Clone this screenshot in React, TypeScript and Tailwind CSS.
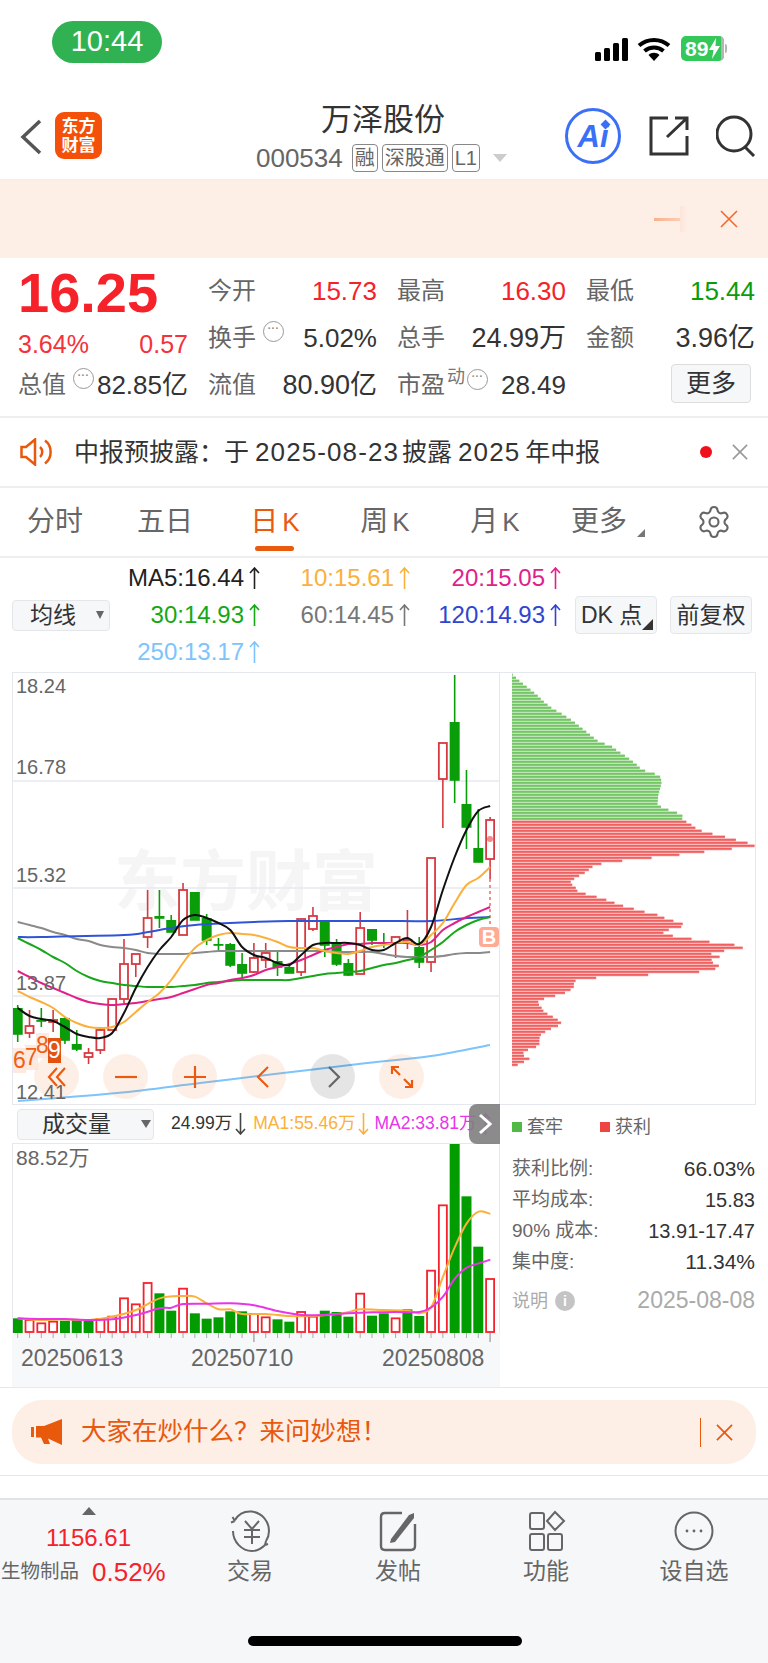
import { Settings } from "lucide-react"

const FONT = "font-['Liberation_Sans','Noto_Sans_CJK_SC',sans-serif]"

type Pt = [number, number]

// one entry per trading day: body top, body bottom, wick top, wick bottom, rising
const CANDLES: [number, number, number, number, boolean][] = [
  [1008, 1034, 1005, 1042, false],
  [1026, 1033, 1010, 1038, true],
  [1020, 1021, 1008, 1027, false],
  [1020, 1022, 1010, 1032, true],
  [1018, 1040, 1017, 1044, false],
  [1044, 1049, 1030, 1051, false],
  [1053, 1057, 1048, 1064, true],
  [1030, 1050, 1029, 1054, true],
  [999, 1030, 999, 1030, true],
  [964, 999, 939, 1003, true],
  [954, 964, 954, 977, true],
  [918, 937, 890, 948, true],
  [916, 918, 890, 928, false],
  [920, 932, 915, 932, false],
  [890, 935, 883, 935, true],
  [892, 920, 892, 920, false],
  [918, 940, 914, 945, false],
  [944, 945, 938, 951, false],
  [944, 965, 943, 967, false],
  [964, 973, 953, 977, false],
  [958, 972, 943, 973, true],
  [953, 960, 943, 968, true],
  [961, 967, 952, 976, false],
  [967, 973, 963, 973, false],
  [919, 972, 919, 976, true],
  [916, 929, 907, 931, true],
  [922, 945, 920, 957, false],
  [943, 964, 939, 966, false],
  [963, 975, 959, 976, false],
  [928, 974, 912, 974, true],
  [929, 940, 929, 945, false],
  [942, 943, 933, 948, false],
  [937, 943, 937, 958, true],
  [940, 943, 910, 949, true],
  [947, 962, 937, 968, false],
  [858, 962, 858, 972, true],
  [743, 779, 743, 828, true],
  [722, 780, 675, 803, false],
  [804, 827, 770, 849, false],
  [848, 862, 809, 862, false],
  [820, 859, 817, 879, true],
]

const VOLUME: [number, boolean][] = [
  [655, false], [660, true], [670, true], [665, true], [662, false], [660, false], [658, false],
  [657, true], [650, true], [595, true], [613, true], [549, true], [580, false], [632, false],
  [566, true], [640, false], [656, false], [652, false], [634, false], [634, false], [642, true],
  [652, true], [658, false], [665, false], [636, true], [650, true], [632, false], [636, false],
  [650, false], [581, true], [647, false], [640, false], [655, true], [628, false], [648, false],
  [512, true], [316, true], [132, false], [289, false], [440, false], [537, true],
]

const MA5 = [1008, 1016, 1019, 1021, 1027, 1034, 1037, 1038, 1033, 1013, 988, 967, 950, 937, 920, 915, 918, 923, 930, 947, 955, 958, 963, 965, 955, 945, 943, 943, 943, 945, 950, 950, 943, 938, 944, 927, 890, 857, 830, 811, 806]
const MA10 = [991, 997, 1002, 1008, 1017, 1023, 1027, 1028, 1027, 1022, 1012, 1002, 993, 980, 963, 948, 940, 935, 933, 934, 935, 938, 942, 947, 948, 948, 951, 953, 954, 951, 947, 945, 943, 942, 945, 935, 923, 903, 885, 878, 867]
const MA20 = [971, 977, 983, 988, 993, 998, 1002, 1004, 1005, 1004, 1003, 1001, 999, 997, 993, 989, 985, 983, 980, 978, 975, 970, 967, 964, 960, 955, 950, 947, 944, 944, 943, 943, 943, 943, 945, 942, 930, 923, 917, 912, 907]
const MA30 = [938, 944, 950, 957, 963, 971, 977, 981, 983, 985, 986, 987, 987, 987, 986, 985, 983, 982, 981, 980, 980, 980, 980, 980, 978, 976, 974, 973, 972, 971, 968, 965, 963, 960, 957, 950, 942, 932, 925, 920, 917]
const MA60 = [922, 925, 928, 932, 935, 939, 941, 945, 947, 948, 950, 953, 954, 954, 954, 953, 952, 951, 951, 951, 951, 951, 951, 951, 951, 951, 951, 952, 952, 952, 952, 954, 956, 957, 957, 957, 956, 954, 953, 953, 952]
const MA120: Pt[] = [[18, 937], [41, 937], [124, 935], [148, 932], [171, 928], [195, 925], [230, 923], [254, 922], [289, 921], [325, 921], [384, 921], [431, 921], [467, 918], [490, 917]]
const MA250: Pt[] = [[18, 1101], [117, 1093], [200, 1083], [283, 1073], [367, 1063], [431, 1056], [490, 1045]]

const VOL_MA1: Pt[] = [[53, 655], [124, 660], [195, 658], [266, 660], [337, 650], [408, 630], [479, 595], [549, 588], [585, 590], [620, 610], [656, 628], [691, 628], [727, 642], [797, 642], [868, 648], [939, 648], [1010, 642], [1046, 636], [1081, 628], [1152, 630], [1223, 632], [1258, 640], [1294, 620], [1329, 530], [1365, 440], [1400, 370], [1436, 335], [1471, 342]]
const VOL_MA2: Pt[] = [[53, 655], [124, 657], [195, 657], [266, 660], [337, 658], [408, 645], [479, 625], [514, 623], [549, 612], [620, 611], [691, 610], [762, 616], [833, 633], [904, 645], [975, 645], [1046, 640], [1117, 637], [1187, 636], [1258, 636], [1294, 622], [1329, 590], [1365, 535], [1400, 503], [1436, 490], [1471, 479]]

// chip distribution outline: [row offset, right edge], both in 1/3 px
const CHIPS: Pt[] = [[40, 38], [60, 60], [80, 85], [100, 110], [120, 130], [140, 155], [160, 190], [180, 220], [200, 245], [220, 270], [240, 295], [255, 335], [270, 355], [290, 385], [310, 410], [325, 425], [335, 460], [345, 480], [360, 485], [375, 482], [400, 475], [430, 472], [440, 490], [450, 520], [460, 548], [470, 545], [478, 552], [485, 568], [495, 580], [505, 595], [515, 628], [522, 660], [530, 690], [540, 725], [548, 760], [555, 765], [565, 665], [575, 578], [585, 498], [592, 422], [600, 348], [610, 285], [620, 272], [630, 260], [638, 248], [645, 233], [655, 218], [665, 208], [672, 220], [680, 228], [690, 233], [698, 260], [708, 297], [716, 322], [725, 346], [735, 375], [743, 405], [752, 437], [760, 472], [768, 490], [778, 520], [786, 548], [795, 548], [804, 508], [814, 490], [822, 512], [830, 563], [840, 620], [850, 703], [857, 740], [866, 686], [875, 625], [884, 665], [893, 636], [902, 630], [910, 666], [918, 640], [927, 653], [936, 528], [945, 340], [953, 237], [962, 218], [971, 225], [980, 218], [990, 205], [998, 185], [1007, 150], [1016, 118], [1025, 112], [1035, 122], [1044, 128], [1052, 132], [1060, 148], [1070, 165], [1078, 178], [1087, 186], [1095, 170], [1104, 148], [1113, 132], [1122, 120], [1132, 118], [1141, 118], [1150, 118], [1158, 105], [1167, 78], [1176, 68], [1185, 73], [1192, 88], [1201, 72], [1210, 53]]

const xAt = (i: number) => 17.7 + 11.81 * i

function curve(pts: Pt[]) {
  let d = `M${pts[0][0]} ${pts[0][1]}`
  for (let i = 0; i < pts.length - 1; i++) {
    const p0 = pts[i - 1] ?? pts[i]
    const p1 = pts[i]
    const p2 = pts[i + 1]
    const p3 = pts[i + 2] ?? p2
    const c1x = p1[0] + (p2[0] - p0[0]) / 6
    const c1y = p1[1] + (p2[1] - p0[1]) / 6
    const c2x = p2[0] - (p3[0] - p1[0]) / 6
    const c2y = p2[1] - (p3[1] - p1[1]) / 6
    d += ` C${c1x} ${c1y} ${c2x} ${c2y} ${p2[0]} ${p2[1]}`
  }
  return d
}

const daily = (ys: number[]): Pt[] => ys.map((y, i) => [xAt(i), y])
const volPts = (pts: Pt[]): Pt[] => pts.map(([x, y]) => [x / 3, 1100 + y / 3])

function chipRight(z: number) {
  for (let i = 0; i < CHIPS.length - 1; i++) {
    const [a, ax] = CHIPS[i]
    const [b, bx] = CHIPS[i + 1]
    if (z >= a && z <= b) return ax + ((bx - ax) * (z - a)) / (b - a)
  }
  return 0
}

function Cross({ size, color, width, className }: { size: number; color: string; width: number; className: string }) {
  return (
    <svg className={className} width={size} height={size} viewBox="0 0 18 18" fill="none" stroke={color} strokeWidth={width}>
      <path d="M1 1L17 17M17 1L1 17" />
    </svg>
  )
}

function StatusBar() {
  return (
    <div className="flex h-[85px] items-start">
      <div className="ml-[52px] mt-[21px] flex h-[42px] w-[110px] items-center justify-center rounded-full bg-[#30b252] text-[29px] text-white">10:44</div>
      <div className="ml-[433px] mt-[36px] flex items-end">
        <div className="flex h-[24px] items-end gap-[3px]">
          <div className="h-[9px] w-[6px] rounded-[1.5px] bg-black" />
          <div className="h-[13px] w-[6px] rounded-[1.5px] bg-black" />
          <div className="h-[18px] w-[6px] rounded-[1.5px] bg-black" />
          <div className="h-[23px] w-[6px] rounded-[1.5px] bg-black" />
        </div>
        <svg className="ml-[9px]" width="34" height="24" viewBox="0 0 34 24" fill="none" stroke="#000" strokeWidth="4">
          <path d="M2 8.5C10.5 1 23.5 1 32 8.5" />
          <path d="M7.5 14C13 9.2 21 9.2 26.500 14" />
          <path d="M17 24L11.500 18C14.500 15 19.500 15 22.500 18Z" fill="#000" stroke="none" />
        </svg>
        <div className="relative ml-[10px] flex h-[25px] w-[43px] items-center overflow-hidden rounded-[5px] bg-[#34c759] pl-[4px] text-[21px] font-bold leading-none text-white">
          89
          <svg className="ml-px" width="11" height="21" viewBox="0 0 11 21"><path d="M7 0L0 12H4.500L3 21L11 8H6.500Z" fill="#fff" /></svg>
          <div className="absolute bottom-0 right-0 top-0 w-[3px] bg-[#b5b5b5]" />
        </div>
        <div className="mb-[8px] ml-px h-[9px] w-[2px] rounded-r bg-[#b5b5b5]" />
      </div>
    </div>
  )
}

function Tag({ children }: { children: string }) {
  return <span className="flex h-[28px] shrink-0 items-center justify-center whitespace-nowrap rounded-[4px] border border-[#888] px-[2px] text-[20px] leading-none text-[#666]">{children}</span>
}

function Header() {
  return (
    <div className="relative flex h-[95px] border-b border-[#eeeeee]">
      <svg className="ml-[20px] mt-[34px]" width="22" height="36" viewBox="0 0 22 36" fill="none" stroke="#555" strokeWidth="3.500"><path d="M20 2L3 18L20 34" /></svg>
      <div className="ml-[13px] mt-[27px] flex h-[47px] w-[47px] flex-col items-center justify-center rounded-[9px] bg-[#f4500a] text-[17px] font-bold leading-[19px] text-white">
        <span>东方</span>
        <span>财富</span>
      </div>
      <div className="ml-[146px] flex w-[270px] flex-col items-center pt-[18px]">
        <div className="text-[31px] leading-[34px] text-[#333]">万泽股份</div>
        <div className="mt-[7px] flex items-center gap-[4px] pr-[3px]">
          <span className="mr-[5px] text-[26px] leading-none text-[#666]">000534</span>
          <Tag>融</Tag>
          <Tag>深股通</Tag>
          <Tag>L1</Tag>
          <span className="ml-[9px] h-0 w-0 border-x-[7px] border-t-[8px] border-x-transparent border-t-[#cccccc]" />
        </div>
      </div>
      <div className="relative ml-[47px] mt-[23px] flex h-[56px] w-[56px] items-center justify-center rounded-full border-[3px] border-[#3b6ff6] text-[31px] font-bold italic leading-none text-[#3b6ff6]">
        Ai
        <span className="absolute right-[9px] top-[10px] h-[7px] w-[7px] rotate-45 bg-[#3b6ff6]" />
      </div>
      <svg className="ml-[28px] mt-[31px]" width="40" height="40" viewBox="0 0 40 40" fill="none" stroke="#333" strokeWidth="3">
        <path d="M19 2H2V38H38V20" />
        <path d="M18 21L38 2M26 2H38V14" />
      </svg>
      <svg className="ml-[27px] mt-[30px]" width="40" height="42" viewBox="0 0 40 42" fill="none" stroke="#333" strokeWidth="3">
        <circle cx="18" cy="19" r="17" />
        <path d="M29 32L38 41" />
      </svg>
    </div>
  )
}

function TopBanner() {
  return (
    <div className="flex h-[78px] items-center bg-[#fdeee6]">
      <div className="ml-[654px] h-[3px] w-[26px] bg-gradient-to-r from-[#f9b08c] to-[#fbcdb6]" />
      <div className="h-[26px] w-[7px] bg-gradient-to-r from-[#fde4d8] to-[#fdeee6]" />
      <Cross className="ml-[33px]" size={18} color="#f0692c" width={1.6} />
    </div>
  )
}

function InfoDots({ className }: { className: string }) {
  return (
    <span className={`flex h-[21px] w-[21px] shrink-0 items-center justify-center rounded-full border border-[#999] text-[10px] font-bold leading-none tracking-[0.5px] text-[#888] ${className}`}>
      <span className="mt-[-4px]">···</span>
    </span>
  )
}

function Stat({ label, value, tone, dots, sup, size = "text-[26px]" }: { label: string; value: string; tone: string; dots?: boolean; sup?: boolean; size?: string }) {
  return (
    <div className="flex h-[26px] items-center whitespace-nowrap">
      <span className="shrink-0 text-[24px] leading-none text-[#666]">{label}</span>
      {sup && <span className="ml-[2px] -translate-y-[8px] text-[18px] leading-none text-[#777]">动</span>}
      {dots && <InfoDots className={sup ? "ml-[2px] -translate-y-[6px]" : "ml-[7px] -translate-y-[7px]"} />}
      <span className={`ml-auto leading-none ${size} ${tone}`}>{value}</span>
    </div>
  )
}

function Quote() {
  return (
    <div className="h-[160px] border-b-2 border-[#eeeeee] pl-[18px] pt-[7px]">
      <div className="grid grid-cols-[170px_169px_169px_169px] gap-x-[20px]">
        <div className="row-span-2 flex flex-col">
          <div className="text-[56px] font-bold leading-[56px] text-[#f5222a]">16.25</div>
          <div className="mt-[11px] flex justify-between text-[25px] leading-none text-[#f5313a]">
            <span>3.64%</span>
            <span>0.57</span>
          </div>
        </div>
        <div className="h-[47px] pt-[13px]"><Stat label="今开" value="15.73" tone="text-[#f5222a]" /></div>
        <div className="h-[47px] pt-[13px]"><Stat label="最高" value="16.30" tone="text-[#f5222a]" /></div>
        <div className="h-[47px] pt-[13px]"><Stat label="最低" value="15.44" tone="text-[#0a9d0a]" /></div>
        <div className="h-[47px] pt-[13px]"><Stat label="换手" value="5.02%" tone="text-[#333]" dots /></div>
        <div className="h-[47px] pt-[13px]"><Stat label="总手" value="24.99万" tone="text-[#333]" size="text-[27px]" /></div>
        <div className="h-[47px] pt-[13px]"><Stat label="金额" value="3.96亿" tone="text-[#333]" size="text-[27px]" /></div>
        <div className="pt-[13px]"><Stat label="总值" value="82.85亿" tone="text-[#333]" dots /></div>
        <div className="pt-[13px]"><Stat label="流值" value="80.90亿" tone="text-[#333]" size="text-[27px]" /></div>
        <div className="pt-[13px]"><Stat label="市盈" value="28.49" tone="text-[#333]" dots sup /></div>
        <div className="flex justify-end pr-[4px] pt-[5px]">
          <button className="h-[39px] w-[80px] rounded-[4px] border border-[#dddddd] bg-[#f6f7f9] text-[25px] leading-none text-[#333]">更多</button>
        </div>
      </div>
    </div>
  )
}

function Notice() {
  return (
    <div className="flex h-[70px] items-center border-b-2 border-[#eeeeee]">
      <svg className="ml-[20px]" width="33" height="28" viewBox="0 0 33 28" fill="none" stroke="#e8590c" strokeWidth="2.500">
        <path d="M1.500 9H6L15 1.500V26.500L6 19H1.500Z" />
        <path d="M20 9C23 11.500 23 16.500 20 19" />
        <path d="M25 2.500C32.500 8 32.500 20 25 25.500" />
      </svg>
      <div className="ml-[21px] flex items-center whitespace-nowrap text-[25px] leading-none text-[#333]">
        <span>中报预披露：于</span>
        <span className="ml-[6px] text-[26px] tracking-[1.1px]">2025-08-23</span>
        <span className="ml-[3px]">披露</span>
        <span className="ml-[6px] text-[26px] tracking-[1.1px]">2025</span>
        <span className="ml-[5px]">年中报</span>
      </div>
      <span className="ml-auto h-[12px] w-[12px] rounded-full bg-[#f0101c]" />
      <Cross className="ml-[20px] mr-[20px]" size={16} color="#999" width={1.8} />
    </div>
  )
}

function Tabs() {
  return (
    <div className="grid h-[70px] grid-cols-[repeat(7,110px)] border-b-2 border-[#eeeeee]">
      <div className="flex items-center justify-center text-[28px] leading-none text-[#666]">分时</div>
      <div className="flex items-center justify-center text-[28px] leading-none text-[#666]">五日</div>
      <div className="relative flex items-center justify-center text-[28px] leading-none text-[#e85a0e]">
        日<span className="ml-[4px] text-[26px]">K</span>
        <span className="absolute bottom-[5px] left-[35px] h-[5px] w-[39px] rounded-full bg-[#e85a0e]" />
      </div>
      <div className="flex items-center justify-center text-[28px] leading-none text-[#666]">周<span className="ml-[4px] text-[26px]">K</span></div>
      <div className="flex items-center justify-center text-[28px] leading-none text-[#666]">月<span className="ml-[4px] text-[26px]">K</span></div>
      <div className="relative flex items-center justify-center pr-[12px]">
        <span className="text-[28px] leading-none text-[#666]">更多</span>
        <span className="absolute bottom-[19px] right-[15px] h-0 w-0 border-b-[8px] border-l-[8px] border-b-[#777] border-l-transparent" />
      </div>
      <div className="flex items-center justify-center pr-[3px]">
        <Settings className="text-[#666]" size={36} strokeWidth={1.4} />
      </div>
    </div>
  )
}

function Arrow({ up, color, gap }: { up: boolean; color: string; gap: string }) {
  return (
    <svg className={`shrink-0 ${gap}`} width="11" height="22" viewBox="0 0 11 22" fill="none" stroke={color} strokeWidth="1.600">
      {up ? <path d="M5.500 22V1M1 6L5.500 1L10 6" /> : <path d="M5.500 0V21M1 16L5.500 21L10 16" />}
    </svg>
  )
}

function MaValue({ text, color }: { text: string; color: string }) {
  return (
    <div className="flex h-[37px] items-center justify-end">
      <span className="text-[24px] leading-none" style={{ color }}>{text}</span>
      <Arrow up color={color} gap="ml-[5px]" />
    </div>
  )
}

function MaPanel() {
  return (
    <div className="flex h-[114px] items-center pl-[12px]">
      <div className="flex h-[31px] w-[98px] items-center rounded-[4px] border border-[#e5e6ea] bg-[#f6f7f9] pl-[17px] text-[23px] leading-none text-[#333]">
        均线
        <span className="ml-[20px] h-0 w-0 border-x-[4px] border-t-[8px] border-x-transparent border-t-[#666]" />
      </div>
      <div className="grid grid-cols-[150px_150px_151px]">
        <MaValue text="MA5:16.44" color="#222222" />
        <MaValue text="10:15.61" color="#fbb03b" />
        <MaValue text="20:15.05" color="#e0218a" />
        <MaValue text="30:14.93" color="#14a814" />
        <MaValue text="60:14.45" color="#777777" />
        <MaValue text="120:14.93" color="#2f45d0" />
        <MaValue text="250:13.17" color="#7cc4fb" />
      </div>
      <div className="relative ml-[14px] flex h-[38px] w-[82px] items-center rounded-[4px] border border-[#e5e6ea] bg-[#f6f7f9] pl-[5px] text-[23px] leading-none text-[#333]">
        DK 点
        <span className="absolute bottom-[3px] right-[3px] h-0 w-0 border-b-[11px] border-l-[11px] border-b-[#333] border-l-transparent" />
      </div>
      <div className="ml-[13px] flex h-[38px] w-[82px] items-center justify-center rounded-[4px] border border-[#e5e6ea] bg-[#f6f7f9] text-[23px] leading-none text-[#333]">前复权</div>
    </div>
  )
}

function CandleChart() {
  return (
    <svg className="absolute inset-0" width="486" height="431" viewBox="13 673 486 431" fill="none">
      {[781, 888, 996].map((y) => (
        <line key={y} x1="13" x2="499" y1={y} y2={y} stroke="#e6e8ef" strokeWidth="1.500" />
      ))}
      {CANDLES.map(([top, bottom, wickTop, wickBottom, up], i) => {
        const x = xAt(i)
        const color = up ? "#d63a40" : "#0a9d0a"
        return (
          <g key={i}>
            <line x1={x} x2={x} y1={wickTop} y2={wickBottom} stroke={color} strokeWidth="1.600" />
            {up ? (
              <rect x={x - 4} y={top} width="8" height={bottom - top} fill="#fff" stroke={color} strokeWidth="1.800" />
            ) : (
              <rect x={x - 5} y={top} width="10" height={bottom - top + 0.8} fill={color} />
            )}
          </g>
        )
      })}
      <line x1="490" x2="490" y1="879" y2="927" stroke="#f06a6a" strokeWidth="1.500" strokeDasharray="3 3" />
      <circle cx="490" cy="839" r="3" fill="#f58a8a" />
      <path d={curve(MA250)} stroke="#7cc4fb" strokeWidth="2" />
      <path d={curve(daily(MA60))} stroke="#8a8a8a" strokeWidth="2" />
      <path d={curve(MA120)} stroke="#2f54d8" strokeWidth="2" />
      <path d={curve(daily(MA30))} stroke="#1aa61a" strokeWidth="2" />
      <path d={curve(daily(MA20))} stroke="#e0218a" strokeWidth="2" />
      <path d={curve(daily(MA10))} stroke="#fbb03b" strokeWidth="2" />
      <path d={curve(daily(MA5))} stroke="#111111" strokeWidth="2" />
    </svg>
  )
}

function ToolButton({ gray, children }: { gray?: boolean; children: React.ReactNode }) {
  return (
    <div className={`flex h-[45px] w-[45px] items-center justify-center rounded-full ${gray ? "bg-black/10" : "bg-[#f47a30]/12"}`}>
      <svg width="26" height="26" viewBox="0 0 26 26" fill="none" stroke={gray ? "#666" : "#ea5a10"} strokeWidth="2.200">{children}</svg>
    </div>
  )
}

function PriceChart() {
  const labels: [string, string][] = [["18.24", "top-[1px]"], ["16.78", "top-[82px]"], ["15.32", "top-[190px]"], ["13.87", "top-[298px]"], ["12.41", "top-[407px]"]]
  return (
    <div className="relative h-[433px] border border-[#e6e8ef]">
      <div className="absolute left-[101px] top-[176px] whitespace-nowrap text-[66px] font-bold leading-none text-[#f5f5f5]">东方财富</div>
      <CandleChart />
      <div className="absolute left-[21px] top-[381px] flex gap-[24px]">
        <ToolButton><path d="M13 4L5 13L13 22M21 4L13 13L21 22" /></ToolButton>
        <ToolButton><path d="M2 13H24" /></ToolButton>
        <ToolButton><path d="M2 13H24M13 2V24" /></ToolButton>
        <ToolButton><path d="M17 3L7 13L17 23" /></ToolButton>
        <ToolButton gray><path d="M9 3L19 13L9 23" /></ToolButton>
        <ToolButton>
          <path d="M3 10V3H10M3 3L11 11M23 16V23H16M23 23L15 15" />
        </ToolButton>
      </div>
      {labels.map(([t, top]) => (
        <span key={t} className={`absolute left-[3px] text-[20px] leading-[24px] text-[#666] ${top}`}>{t}</span>
      ))}
      <span className="absolute left-0 top-[375px] h-[25px] w-[13px] bg-[#fde3d6]/80 text-center text-[23px] leading-[25px] text-[#ee5f18]">6</span>
      <span className="absolute left-[12px] top-[372px] h-[25px] w-[13px] bg-[#fde3d6]/80 text-center text-[23px] leading-[25px] text-[#ee5f18]">7</span>
      <span className="absolute left-[23px] top-[360px] h-[25px] w-[13px] bg-[#fde3d6]/80 text-center text-[23px] leading-[25px] text-[#ee5f18]">8</span>
      <span className="absolute left-[35px] top-[365px] h-[25px] w-[13px] bg-[#e2530f] text-center text-[23px] leading-[25px] text-white">9</span>
      <span className="absolute right-0 top-[254px] flex h-[20px] w-[20px] items-center justify-center rounded-[4px] bg-[#ffab94] text-[20px] font-bold leading-none text-white">B</span>
    </div>
  )
}

function VolumeHeader() {
  return (
    <div className="flex h-[38px] items-center overflow-hidden whitespace-nowrap pl-[5px] text-[17.5px] leading-none">
      <div className="flex h-[31px] w-[137px] shrink-0 items-center rounded-[4px] border border-[#e5e6ea] bg-[#f6f7f9] pl-[24px] text-[23px] text-[#333]">
        成交量
        <span className="ml-[30px] h-0 w-0 border-x-[5px] border-t-[8px] border-x-transparent border-t-[#666]" />
      </div>
      <span className="ml-[17px] text-[#333]">24.99万</span>
      <Arrow up={false} color="#444" gap="ml-[3px]" />
      <span className="ml-[7px] text-[#fbb03b]">MA1:55.46万</span>
      <Arrow up={false} color="#fbb03b" gap="ml-[3px]" />
      <span className="ml-[5px] text-[#e835e8]">MA2:33.81万</span>
      <Arrow up color="#e835e8" gap="ml-[3px]" />
    </div>
  )
}

function VolumeChart() {
  return (
    <div className="relative h-[190px] border-x border-t border-[#e6e8ef]">
      <svg className="absolute inset-0" width="486" height="189" viewBox="13 1144 486 189" fill="none">
        {VOLUME.map(([z, up], i) => {
          const x = xAt(i)
          const top = 1100 + z / 3
          return up ? (
            <rect key={i} x={x - 4} y={top} width="8" height={1332 - top} fill="#fff" stroke="#f5222d" strokeWidth="1.800" />
          ) : (
            <rect key={i} x={x - 5} y={top} width="10" height={1333 - top} fill="#009c00" />
          )
        })}
        <path d={curve(volPts(VOL_MA1))} stroke="#fbb03b" strokeWidth="2" />
        <path d={curve(volPts(VOL_MA2))} stroke="#e835e8" strokeWidth="2" />
      </svg>
      <span className="absolute left-[3px] top-[2px] text-[21px] leading-[24px] text-[#666]">88.52万</span>
    </div>
  )
}

function DateAxis() {
  return (
    <div className="h-[54px] bg-[#f7f8fa]">
      <svg className="block" width="488" height="10" viewBox="12 1333 488 10" stroke="#aaaaaa" strokeWidth="1">
        {VOLUME.map((_, i) => (
          <line key={i} x1={xAt(i)} x2={xAt(i)} y1="1333" y2={i === 20 || i === 40 ? 1342 : 1338} strokeWidth={i === 20 || i === 40 ? 1.500 : 1} />
        ))}
      </svg>
      <div className="flex pl-[9px] pt-[2px] text-[23px] leading-[26px] text-[#666]">
        <span className="w-[170px]">20250613</span>
        <span className="w-[191px]">20250710</span>
        <span>20250808</span>
      </div>
    </div>
  )
}

function ChipChart() {
  const rows: { z: number; w: number }[] = []
  for (let z = 40; z <= 1212; z += 9) rows.push({ z, w: chipRight(z) - 36 })
  return (
    <div className="h-[433px] w-[256px] border-y border-r border-[#e6e8ef] pl-[12px]">
      <svg className="block" width="243" height="431" viewBox="0 0 243 431">
        {rows.map(({ z, w }) => {
          const y = z / 3 - 13
          const loss = z < 480
          return (
            <g key={z}>
              <rect x="0" y={y} width={w / 3} height="3" fill={loss ? "#b5e0ad" : "#fbb0b0"} />
              <rect x="0" y={y + 0.6} width={w / 3} height="1.800" fill={loss ? "#74c565" : "#ef6060"} />
            </g>
          )
        })}
      </svg>
    </div>
  )
}

function ChipStats() {
  const rows = [
    ["获利比例:", "66.03%", "text-[21px]"],
    ["平均成本:", "15.83", "text-[20px]"],
    ["90% 成本:", "13.91-17.47", "text-[20px]"],
    ["集中度:", "11.34%", "text-[21px]"],
  ]
  return (
    <div className="w-[255px] pl-[12px]">
      <div className="flex h-[43px] items-center pt-[1px] text-[18px] leading-none text-[#666]">
        <span className="h-[10px] w-[10px] bg-[#52b947]" />
        <span className="ml-[5px]">套牢</span>
        <span className="ml-[37px] h-[10px] w-[10px] bg-[#ee4444]" />
        <span className="ml-[5px]">获利</span>
      </div>
      <div className="mt-[5px] flex flex-col">
        {rows.map(([k, v, size]) => (
          <div key={k} className="flex h-[31px] items-center justify-between">
            <span className="text-[19px] leading-none text-[#666]">{k}</span>
            <span className={`leading-none text-[#333] ${size}`}>{v}</span>
          </div>
        ))}
      </div>
      <div className="mt-[12px] flex items-center">
        <span className="text-[18px] leading-none text-[#aaaaaa]">说明</span>
        <span className="ml-[7px] flex h-[20px] w-[20px] items-center justify-center rounded-full bg-[#c4c4c4] text-[14px] font-bold leading-none text-white">i</span>
        <span className="ml-auto text-[23px] leading-none text-[#aaaaaa]">2025-08-08</span>
      </div>
    </div>
  )
}

function Promo() {
  return (
    <div className="h-[88px] border-b border-[#e8e8ec] px-[12px] pt-[12px]">
      <div className="flex h-[64px] items-center rounded-[30px] bg-[#fdeee6] pl-[19px] text-[#e8590c]">
        <svg width="31" height="26" viewBox="0 0 31 26">
          <path d="M0 8H3V18H0ZM5 7H13L31 0V26L17 19.500L19 25H13L10 18.500H5Z" fill="#e8590c" />
        </svg>
        <span className="ml-[19px] text-[25.500px] leading-none">大家在炒什么？来问妙想！</span>
        <span className="ml-auto h-[29px] w-px bg-[#e8590c]" />
        <Cross className="ml-[15px] mr-[23px]" size={17} color="#e8590c" width={1.8} />
      </div>
    </div>
  )
}

function NavItem({ label, children }: { label: string; children: React.ReactNode }) {
  return (
    <div className="flex w-[148px] flex-col items-center pt-[10px]">
      <svg width="44" height="42" viewBox="0 0 44 42" fill="none" stroke="#666" strokeWidth="2">{children}</svg>
      <span className="mt-[6px] text-[23px] leading-[26px] text-[#666]">{label}</span>
    </div>
  )
}

function BottomNav() {
  return (
    <div className="relative mt-[22px] h-[165px] border-t-2 border-[#e1e2e6] bg-[#f6f7f9]">
      <div className="flex">
        <div className="flex w-[176px] flex-col items-start pt-[7px]">
          <span className="ml-[82px] h-0 w-0 border-x-[7px] border-b-[8px] border-x-transparent border-b-[#666]" />
          <span className="ml-[46px] mt-[10px] text-[24px] leading-[26px] text-[#f5222a]">1156.61</span>
          <div className="mt-[8px] flex items-center whitespace-nowrap pl-px">
            <span className="text-[19.5px] leading-none text-[#666]">生物制品</span>
            <span className="ml-[13px] text-[26px] leading-none text-[#f5222a]">0.52%</span>
          </div>
        </div>
        <NavItem label="交易">
          <path d="M7 10C11 3 18 1 24 1.500C34 3 41 11 41 21C41 24 40 28 38 31M7 11L4.500 7M7 11L3 12.500" />
          <path d="M5 21C5 32 14 41 24 41C29 41 33 39 37 35M37 35L40 34M37 35L38 31" />
          <path d="M17 11L24 19L31 11M16 20H32M16 27H32M24 19V34" />
        </NavItem>
        <NavItem label="发帖">
          <path d="M26 3H9C6 3 5 4 5 7V36C5 39 6 40 9 40H35C38 40 39 39 39 36V14" strokeWidth="2.400" />
          <path d="M15 29L33 5L38 3L38 8L19 32L14 33Z" fill="#666" stroke="none" />
        </NavItem>
        <NavItem label="功能">
          <rect x="6" y="3" width="14" height="16" rx="2" />
          <path d="M31 2L40 11L31 20L23 11Z" />
          <rect x="6" y="24" width="14" height="16" rx="2" />
          <rect x="24" y="24" width="14" height="16" rx="2" />
        </NavItem>
        <NavItem label="设自选">
          <circle cx="22" cy="21" r="18.500" />
          <circle cx="15" cy="21" r="1.400" fill="#666" stroke="none" />
          <circle cx="22" cy="21" r="1.400" fill="#666" stroke="none" />
          <circle cx="29" cy="21" r="1.400" fill="#666" stroke="none" />
        </NavItem>
      </div>
      <div className="absolute bottom-[17px] left-[248px] h-[10px] w-[274px] rounded-full bg-black" />
    </div>
  )
}

export default function App() {
  return (
    <div className={`flex h-[1663px] w-[768px] flex-col overflow-hidden bg-white ${FONT}`}>
      <StatusBar />
      <Header />
      <TopBanner />
      <Quote />
      <Notice />
      <Tabs />
      <MaPanel />
      <div className="flex h-[716px] border-b border-[#e6e8ec] pl-[12px]">
        <div className="relative w-[488px]">
          <PriceChart />
          <VolumeHeader />
          <VolumeChart />
          <DateAxis />
          <div className="absolute left-[457px] top-[432px] flex h-[40px] w-[31px] items-center justify-center rounded-l-lg bg-[#7e7e7e]/90 text-white">
            <svg width="14" height="22" viewBox="0 0 14 22" fill="none" stroke="#fff" strokeWidth="3"><path d="M2 2L12 11L2 20" /></svg>
          </div>
        </div>
        <div>
          <ChipChart />
          <ChipStats />
        </div>
      </div>
      <Promo />
      <BottomNav />
    </div>
  )
}
